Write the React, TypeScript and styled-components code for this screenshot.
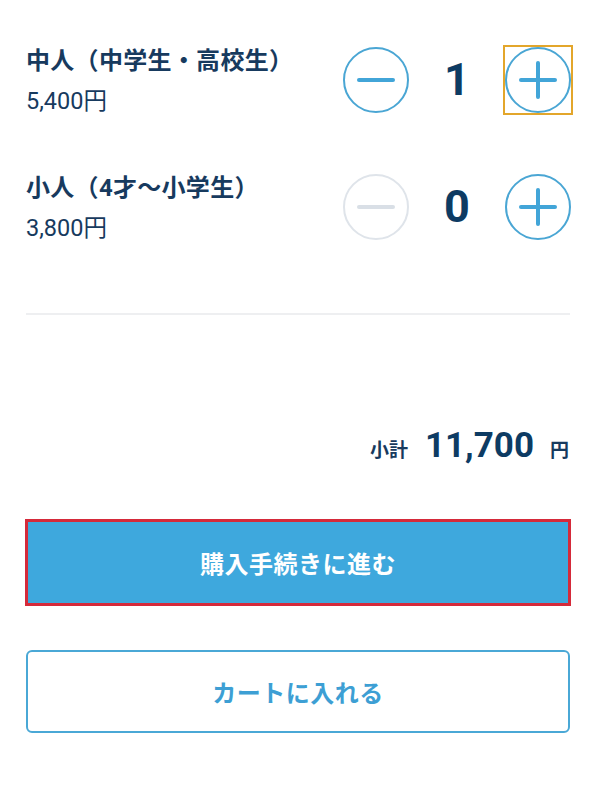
import React from "react";
import styled, { createGlobalStyle } from "styled-components";

const Global = createGlobalStyle`
  html, body { margin: 0; padding: 0; background: #ffffff; }
  body { font-family: Roboto, "Noto Sans CJK JP", "Noto Sans", sans-serif; }
  * { box-sizing: border-box; }
`;

const Page = styled.div`
  width: 600px;
  padding: 16px 30px 0 26px;
  display: flex;
  flex-direction: column;
`;

const Row = styled.div`
  height: 127px;
  display: flex;
  align-items: center;
  justify-content: space-between;
`;

const Info = styled.div`
  display: flex;
  flex-direction: column;
  gap: 10px;
  padding-top: 3px;
`;

const Label = styled.div`
  font-size: 24px;
  line-height: 30px;
  font-weight: 700;
  color: #173a5e;
  letter-spacing: 0.3px;
`;

const Price = styled.div`
  font-size: 23.5px;
  line-height: 30px;
  font-weight: 400;
  color: #173a5e;
`;

const Controls = styled.div`
  display: flex;
  align-items: center;
  margin-right: -1px;
`;

const StepButton = styled.button<{ $focused?: boolean }>`
  width: 66px;
  height: 66px;
  padding: 0;
  border: none;
  background: transparent;
  display: flex;
  align-items: center;
  justify-content: center;
  cursor: pointer;
  box-shadow: ${(p) => (p.$focused ? "0 0 0 2px #e3a62b" : "none")};
`;

const Count = styled.div`
  width: 96px;
  text-align: center;
  font-size: 45px;
  line-height: 50px;
  font-weight: 700;
  color: #0d3b63;
`;

const Divider = styled.div`
  margin-top: 43px;
  height: 2px;
  background: #eeeff1;
`;

const Subtotal = styled.div`
  margin-top: 106px;
  height: 50px;
  display: flex;
  justify-content: flex-end;
  align-items: baseline;
  color: #173a5e;
  padding-right: 1px;
`;

const SubLabel = styled.span`
  font-size: 19px;
  font-weight: 700;
  margin-right: 17px;
`;

const SubAmount = styled.span`
  font-size: 35px;
  font-weight: 700;
  line-height: 50px;
  color: #0d3b63;
  margin-right: 16px;
`;

const SubUnit = styled.span`
  font-size: 19px;
  font-weight: 700;
`;

const PrimaryButton = styled.button`
  margin: 48px -1px 0 -1px;
  height: 87px;
  border: 3px solid #d52a3a;
  background: #3ea8dd;
  color: #ffffff;
  font-family: inherit;
  font-size: 24px;
  font-weight: 700;
  letter-spacing: 0.5px;
  cursor: pointer;
`;

const SecondaryButton = styled.button`
  margin-top: 44px;
  height: 83px;
  border: 2px solid #4aa8d6;
  border-radius: 6px;
  background: #ffffff;
  color: #3d9fd4;
  font-family: inherit;
  font-size: 24px;
  font-weight: 700;
  letter-spacing: 0.5px;
  cursor: pointer;
`;

const CircleIcon: React.FC<{ plus?: boolean; disabled?: boolean }> = ({ plus, disabled }) => {
  const ring = disabled ? "#dfe4ea" : "#4aa6d4";
  const bar = disabled ? "#d9dfe6" : "#42a5d8";
  return (
    <svg width="66" height="66" viewBox="0 0 66 66">
      <circle cx="33" cy="33" r="32" fill="none" stroke={ring} strokeWidth="2" />
      <line x1="16" y1="33" x2="50" y2="33" stroke={bar} strokeWidth="4" strokeLinecap="round" />
      {plus && <line x1="33" y1="16" x2="33" y2="50" stroke={bar} strokeWidth="4" strokeLinecap="round" />}
    </svg>
  );
};

const items = [
  { label: "中人（中学生・高校生）", price: "5,400円", count: 1, focused: true },
  { label: "小人（4才〜小学生）", price: "3,800円", count: 0, focused: false },
];

export default function App() {
  return (
    <>
      <Global />
      <Page>
        {items.map((it) => (
          <Row key={it.label}>
            <Info>
              <Label>{it.label}</Label>
              <Price>{it.price}</Price>
            </Info>
            <Controls>
              <StepButton aria-label="減らす">
                <CircleIcon disabled={it.count === 0} />
              </StepButton>
              <Count>{it.count}</Count>
              <StepButton aria-label="増やす" $focused={it.focused}>
                <CircleIcon plus />
              </StepButton>
            </Controls>
          </Row>
        ))}
        <Divider />
        <Subtotal>
          <SubLabel>小計</SubLabel>
          <SubAmount>11,700</SubAmount>
          <SubUnit>円</SubUnit>
        </Subtotal>
        <PrimaryButton>購入手続きに進む</PrimaryButton>
        <SecondaryButton>カートに入れる</SecondaryButton>
      </Page>
    </>
  );
}
